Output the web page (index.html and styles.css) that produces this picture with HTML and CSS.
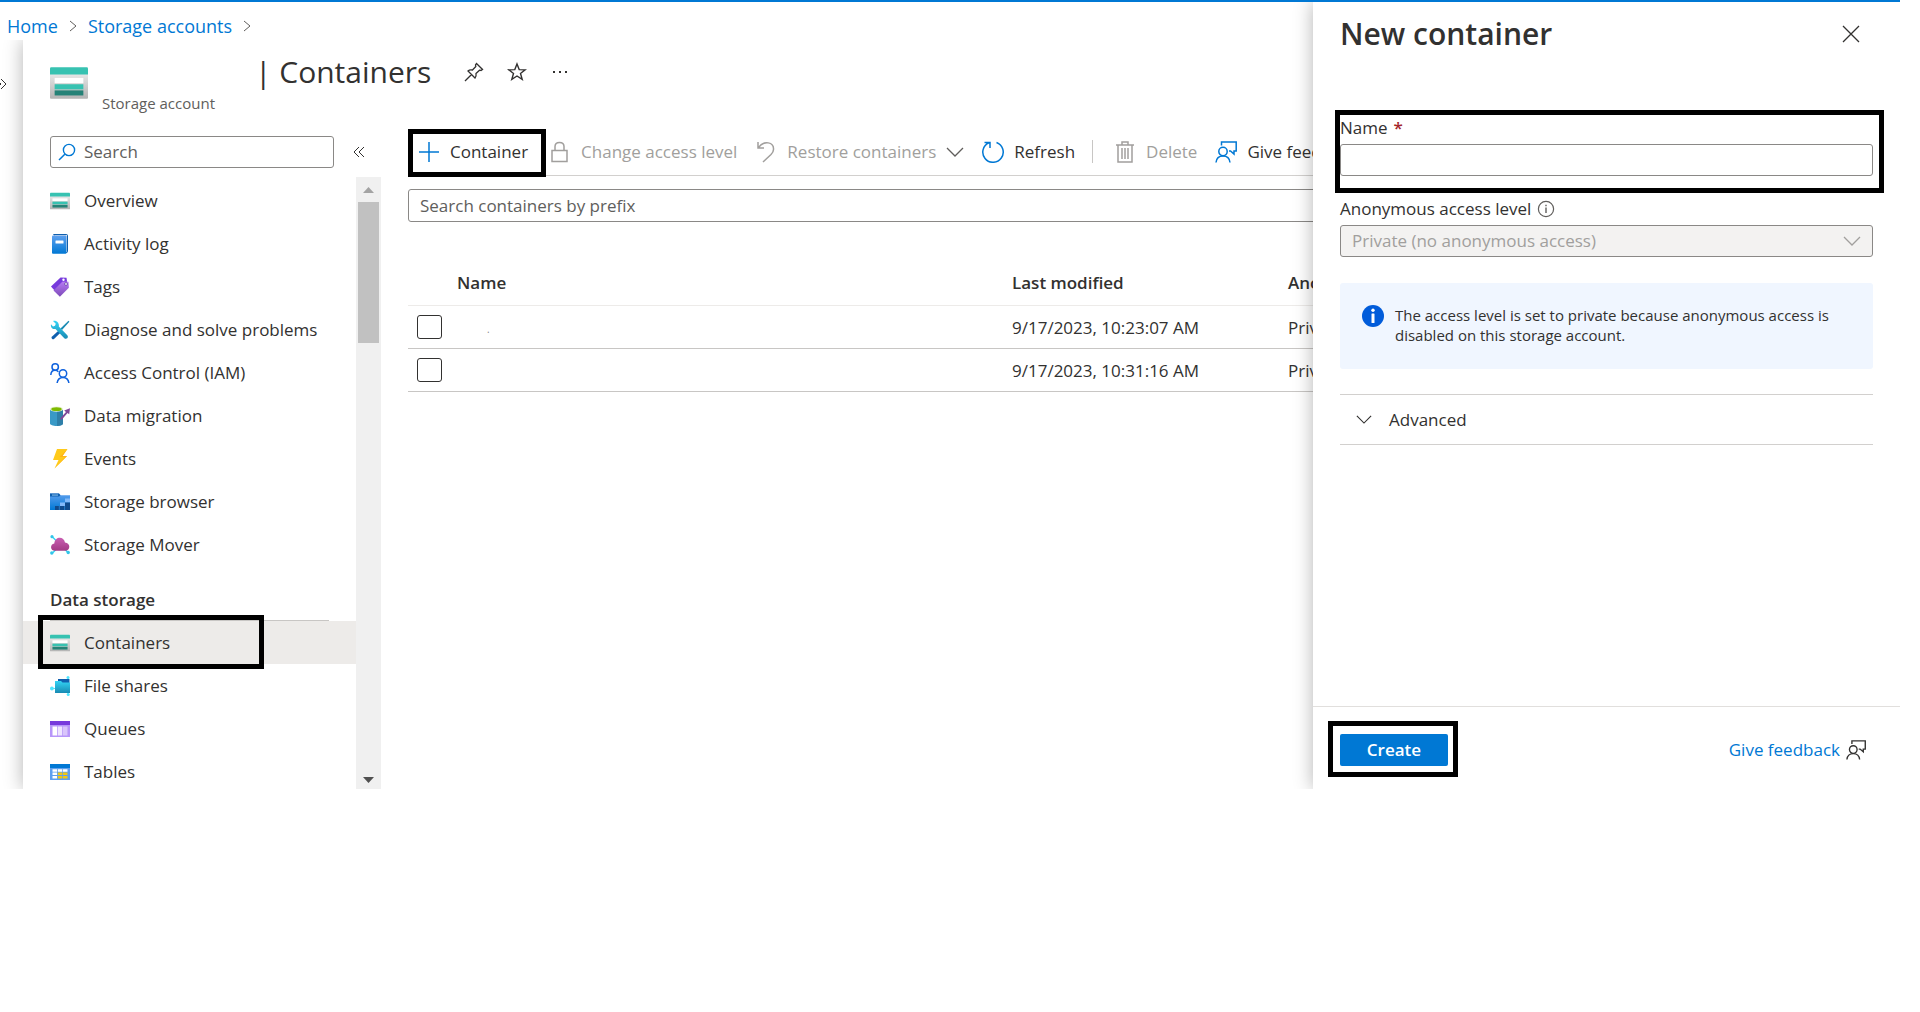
FILE: index.html
```html
<!DOCTYPE html>
<html lang="en">
<head>
<meta charset="utf-8">
<title>Containers - Storage account</title>
<link rel="stylesheet" href="styles.css">
</head>
<body>
<svg class="defs" aria-hidden="true">
  <defs>
    <linearGradient id="g-grey" x1="0" y1="0" x2="0" y2="1"><stop offset="0" stop-color="#f2f2f2"/><stop offset="1" stop-color="#b3b3b3"/></linearGradient>
    <linearGradient id="g-blue" x1="0" y1="0" x2="0" y2="1"><stop offset="0" stop-color="#5ea0ef"/><stop offset="1" stop-color="#0078d4"/></linearGradient>
    <linearGradient id="g-cyan" x1="0" y1="0" x2="0" y2="1"><stop offset="0" stop-color="#32d4f5"/><stop offset="1" stop-color="#198ab3"/></linearGradient>
    <linearGradient id="g-purple" x1="0" y1="0" x2="0" y2="1"><stop offset="0" stop-color="#b77af4"/><stop offset="1" stop-color="#7c4ab8"/></linearGradient>
    <linearGradient id="g-pink" x1="0" y1="0" x2="0" y2="1"><stop offset="0" stop-color="#c95eb2"/><stop offset="1" stop-color="#a33a85"/></linearGradient>
    <symbol id="storage" viewBox="0 0 18 18">
      <rect x="0" y="2" width="18" height="14.500" rx=".5" fill="url(#g-grey)"/>
      <path d="M.6 1.500h16.800q.6 0 .6.600V5H0V2.100Q0 1.500 .6 1.500z" fill="#37c2b1"/>
      <rect x="2.200" y="6.600" width="13.600" height="2.500" fill="#fff"/>
      <rect x="2.200" y="9.600" width="13.600" height="2.400" fill="#37c2b1"/>
      <rect x="2.200" y="12.500" width="13.600" height="2.400" fill="#258277"/>
    </symbol>
    <symbol id="feedback" viewBox="0 0 22 22">
      <g fill="none" stroke="currentColor" stroke-width="1.500">
        <circle cx="8" cy="10.500" r="4.200"/><path d="M1 21.500c.4-4 3-6.500 7-6.500s6.600 2.500 7 6.500M6.500 4.500V1h14.700v9H19v3l-3.500-3h-1.500"/>
      </g>
    </symbol>
    <symbol id="chev" viewBox="0 0 18 10"><path d="M1 1l8 8 8-8" fill="none" stroke="currentColor" stroke-width="1.300"/></symbol>
    <symbol id="chev-r" viewBox="0 0 8 12"><path d="M1 1l6 5-6 5" fill="none" stroke="currentColor"/></symbol>
    <symbol id="dbl" viewBox="0 0 12 12"><path d="M6 1L1 6l5 5M11 1L6 6l5 5" fill="none" stroke="currentColor"/></symbol>
  </defs>
</svg>

<div class="shell">
  <div class="workspace">
    <nav class="crumbs" aria-label="Breadcrumb">
      <a href="#">Home</a>
      <svg class="crumb-sep"><use href="#chev-r"/></svg>
      <a href="#">Storage accounts</a>
      <svg class="crumb-sep"><use href="#chev-r"/></svg>
    </nav>
    <div class="stage">
      <div class="rail"><button class="icon-btn expand" aria-label="Expand"><svg class="dbl"><use href="#dbl"/></svg></button></div>
      <div class="blade">
        <header class="blade-head">
          <svg class="res-icon"><use href="#storage"/></svg>
          <p class="res-type">Storage account</p>
          <h1>| Containers</h1>
          <button class="icon-btn" aria-label="Pin"><svg width="20" height="20" viewBox="0 0 20 20"><path d="M12.500 1.500l6 6-1.500 1-1.500-.3-3.500 3.300c.4 2 0 3.300-1 4.500L4 9c1.200-1.200 2.500-1.500 4.500-1l3.300-3.500-.3-1.500zM7.300 12.700L1 19" fill="none" stroke="currentColor" stroke-width="1.300"/></svg></button>
          <button class="icon-btn" aria-label="Favorite"><svg width="20" height="20" viewBox="0 0 20 20"><path d="M10 2l2.200 5.600 6 .2-4.700 3.700 1.700 5.800L10 14l-5.200 3.300 1.700-5.800L1.800 7.800l6-.2z" fill="none" stroke="currentColor" stroke-width="1.400"/></svg></button>
          <button class="icon-btn" aria-label="More"><svg width="20" height="20" viewBox="0 0 20 20"><path d="M3 9h2v2H3zM9 9h2v2H9zM15 9h2v2h-2z" fill="currentColor"/></svg></button>
        </header>
        <div class="blade-body">
          <div class="side">
            <div class="side-search">
              <label class="search">
                <svg width="18" height="18" viewBox="0 0 18 18"><path d="M6.800 11.200L1 17" stroke="#0078d4" stroke-width="1.500"/><circle cx="11" cy="7" r="5.600" fill="none" stroke="#0078d4" stroke-width="1.400"/></svg>
                <input type="text" placeholder="Search" aria-label="Search menu">
              </label>
              <button class="icon-btn" aria-label="Collapse menu"><svg class="dbl"><use href="#dbl"/></svg></button>
            </div>
            <div class="menu-scroll">
              <nav class="menu" aria-label="Resource menu">
                <a href="#"><svg><use href="#storage"/></svg>Overview</a>
                <a href="#"><svg viewBox="0 0 20 20"><path d="M3 0h13q2 0 2 2v15q0 2-2 2z" fill="#0f5fae"/><path d="M4 1h13v17h-2z" fill="#e6e6e6"/><rect x="2" y="1.500" width="14.500" height="18.300" rx="1" fill="url(#g-blue)"/><rect x="5.500" y="6.500" width="8" height="3" rx=".5" fill="#fff"/></svg>Activity log</a>
                <a href="#"><svg viewBox="0 0 20 20"><path d="M1 9.500L10.500.6l6 .2.600 4L5 14z" fill="#773adc"/><path d="M3.500 13.500L12.500 4.500l6 .300.400 6-9 9z" fill="url(#g-purple)"/><circle cx="13.500" cy="2.800" r="1.200" fill="#fff"/><circle cx="16" cy="7" r="1.400" fill="#fff" stroke="#552f99" stroke-width=".7"/></svg>Tags</a>
                <a href="#"><svg viewBox="0 0 20 20"><path d="M18.500.8l.9.900L12 10l-1.500-1.500z" fill="#198ab3"/><path d="M9.500 9.800l2 2L4 19q-1 .8-2-.2t-.2-2z" fill="#0f5fae"/><path d="M3 1l2.800 2.800-.8 2-2 .7L1 4.300C.3 7 2.300 9.600 5.500 9l8.800 9.200c2 1.800 4.800-.6 3-2.900L8.800 6.500C9.500 3 6.500-.2 3 1z" fill="url(#g-cyan)"/></svg>Diagnose and solve problems</a>
                <a href="#"><svg viewBox="0 0 20 20"><g fill="none" stroke="#0f62de" stroke-width="1.500"><circle cx="5.200" cy="4" r="3.200"/><path d="M.8 12C1 9 2.500 7.300 5 7.300c1.500 0 2.600.5 3.400 1.500"/><circle cx="13" cy="10.500" r="3.700"/><path d="M7 21c.3-4 2.500-6.600 6-6.600s5.700 2.600 6 6.600"/></g></svg>Access Control (IAM)</a>
                <a href="#"><svg viewBox="0 0 20 20"><path d="M0 3v14.500c0 1.300 3 2.500 6.500 2.500s6.500-1.200 6.500-2.500V3z" fill="#3999c6"/><path d="M7 4h6v13.500c0 1.300-2.500 2.300-6 2.500z" fill="#2f7fa8"/><ellipse cx="6.500" cy="3.200" rx="6.500" ry="2.600" fill="#e8f2d0"/><ellipse cx="6.500" cy="3.200" rx="5.200" ry="1.900" fill="#7fba00"/><path d="M10 12.500l6-6.500-1.800-1.600L20 2.200l-.8 6-1.700-1.100-6 7z" fill="#804998"/></svg>Data migration</a>
                <a href="#"><svg viewBox="0 0 20 20"><path d="M7 0h10.500l-5 7H17L4.500 19.600 8.500 11H3z" fill="#ffca1a"/><path d="M17.500 0l-5 7H17L4.500 19.600 15 8H9.500z" fill="#ffb31a"/></svg>Events</a>
                <a href="#"><svg viewBox="0 0 20 20"><path d="M0 1.500h9l1.500 1.700H20V18H0z" fill="url(#g-blue)"/><path d="M0 1.500h9l1.500 1.700-1.500 1.300H0z" fill="#0f5fae"/><path d="M2 2.600h6v.9H2z" fill="#9cd0f8"/><path d="M15 6.500h5v4h-5zM10 10.500h5v3.500h-5z" fill="#83b9f9"/><path d="M5 14h15v4H5zM15 10.500h5V14h-5z" fill="#114a8b"/><path d="M9.300 14v4M14.600 14v4" stroke="#2b88d8" stroke-width=".8"/></svg>Storage browser</a>
                <a href="#"><svg viewBox="0 0 20 20"><path d="M2 1.500l6 6M2 18.500l6-6M18.500 18l-6-6" stroke="#32d4f5" stroke-width="1.400"/><circle cx="2" cy="1.700" r="1.600" fill="#32c5e9"/><circle cx="1.800" cy="18" r="1.700" fill="#32c5e9"/><circle cx="18.200" cy="17.500" r="1.700" fill="#32c5e9"/><path d="M5 15.800c-5.300 0-5-6.600-.7-7.200C4.800 1 14 .8 15 7.600c5.800.300 5.600 8.200.200 8.200z" fill="url(#g-pink)"/></svg>Storage Mover</a>
                <h2>Data storage</h2>
                <a href="#" class="current" aria-current="page"><svg><use href="#storage"/></svg>Containers</a>
                <a href="#"><svg viewBox="0 0 20 20"><path d="M18 1v18M2 12.500h5" stroke="#50e6ff"/><path d="M8 3h11.500v5H8z" fill="#0f5fae"/><path d="M5 5h6l1.500 1.500H20V17H5z" fill="url(#g-cyan)"/><circle cx="18" cy="1.500" r="1.500" fill="#50e6ff"/><circle cx="18.200" cy="18.500" r="1.500" fill="#50e6ff"/><circle cx="1.900" cy="12.500" r="1.900" fill="#50e6ff"/></svg>File shares</a>
                <a href="#"><svg viewBox="0 0 20 20"><rect y="2" width="20" height="16" rx=".6" fill="#b796f9"/><path d="M0 2h20v4H0z" fill="#773adc"/><path d="M2.500 7.500h4.500v9H2.500z" fill="#fff"/><path d="M7.700 7.500h4.500v9H7.700z" fill="#efe6ff"/><path d="M13 7.500h4.500v9H13z" fill="#d9c5fb"/></svg>Queues</a>
                <a href="#"><svg viewBox="0 0 20 20"><rect y="2" width="20" height="16" rx=".6" fill="#5ea0ef"/><path d="M0 2h20v4H0z" fill="#0078d4"/><path d="M2.500 7.300h4.500v2.500H2.500zM7.800 7.300h4.500v2.500H7.800zM13 7.300h4.500v2.500H13zM2.500 10.600h4.500v2.500H2.500zM2.500 13.900h4.500v2.500H2.500z" fill="#fff"/><path d="M7.800 10.600h4.500v2.500H7.800zM13 10.600h4.500v2.500H13zM7.800 13.900h4.500v2.500H7.800zM13 13.900h4.500v2.500H13z" fill="#f2c811"/></svg>Tables</a>
              </nav>
              <div class="scrollbar" aria-hidden="true">
                <svg width="11" height="6" viewBox="0 0 11 6"><path d="M0 6l5.500-6L11 6z" fill="#a3a3a3"/></svg>
                <div class="thumb"></div>
                <svg width="11" height="6" viewBox="0 0 11 6"><path d="M0 0l5.500 6L11 0z" fill="#505050"/></svg>
              </div>
            </div>
          </div>
          <main class="main">
            <div class="toolbar">
              <button class="tool marked"><svg class="blue" viewBox="0 0 22 22"><path d="M11 1v20M1 11h20" stroke="currentColor" stroke-width="1.500"/></svg>Container</button>
              <button class="tool" disabled><svg viewBox="0 0 22 22"><path d="M3 9.500h15V20.500H3zM6 9.500V5.500c0-5.500 9-5.500 9 0v4" fill="none" stroke="currentColor" stroke-width="1.500"/></svg>Change access level</button>
              <button class="tool" disabled><svg viewBox="0 0 22 22"><path d="M3 1v6h6M3.500 6.500C9-1 19 1 18.500 8.500c0 2-1 3.500-2.500 5L8 21" fill="none" stroke="currentColor" stroke-width="1.500"/></svg>Restore containers<svg class="tool-chev"><use href="#chev"/></svg></button>
              <button class="tool"><svg class="blue" viewBox="0 0 22 22"><path d="M14.500 1.500A10.200 10.200 0 1 1 7 1.700M2.500 1.500H8v5.500" fill="none" stroke="currentColor" stroke-width="1.500"/></svg>Refresh</button>
              <span class="divider"></span>
              <button class="tool" disabled><svg viewBox="0 0 22 22"><path d="M2 4h18M4 4v17h14V4M8 4V1h6v3M8 7v11M11 7v11M14 7v11" fill="none" stroke="currentColor" stroke-width="1.500"/></svg>Delete</button>
              <button class="tool"><svg class="blue"><use href="#feedback"/></svg>Give feedback</button>
            </div>
            <input class="field prefix" type="text" placeholder="Search containers by prefix" aria-label="Search containers by prefix">
            <table class="grid">
              <thead><tr><th class="c-check"></th><th class="c-name">Name</th><th class="c-date">Last modified</th><th>Anonymous access level</th></tr></thead>
              <tbody>
                <tr><td><input type="checkbox" aria-label="Select first container"></td><td><span class="speck">.</span></td><td>9/17/2023, 10:23:07 AM</td><td>Private</td></tr>
                <tr><td><input type="checkbox" aria-label="Select second container"></td><td></td><td>9/17/2023, 10:31:16 AM</td><td>Private</td></tr>
              </tbody>
            </table>
          </main>
        </div>
      </div>
    </div>
  </div>

  <aside class="panel" aria-label="New container">
    <header class="panel-head">
      <h2>New container</h2>
      <button class="icon-btn" aria-label="Close"><svg width="18" height="18" viewBox="0 0 18 18"><path d="M1 1l16 16M17 1L1 17" stroke="currentColor" stroke-width="1.300"/></svg></button>
    </header>
    <form class="panel-form">
      <div class="form-row name-row">
        <label for="cname">Name <span class="req">*</span></label>
        <input class="field" id="cname" type="text">
      </div>
      <div class="form-row">
        <label for="level">Anonymous access level
          <svg class="hint" width="18" height="18" viewBox="0 0 18 18"><circle cx="9" cy="9" r="7.600" fill="none" stroke="currentColor" stroke-width="1.200"/><path d="M8.300 4.800h1.400v1.500H8.300zM8.300 7.500h1.400v5.600H8.300z" fill="currentColor"/></svg>
        </label>
        <div class="select">
          <select class="field" id="level" disabled><option>Private (no anonymous access)</option></select>
          <svg class="select-chev"><use href="#chev"/></svg>
        </div>
      </div>
      <div class="notice">
        <svg width="22" height="22" viewBox="0 0 22 22"><circle cx="11" cy="11" r="11" fill="#015cda"/><circle cx="11" cy="5.300" r="1.700" fill="#fff"/><rect x="9.500" y="8.500" width="3" height="9.500" rx=".5" fill="#fff"/></svg>
        <p>The access level is set to private because anonymous access is disabled on this storage account.</p>
      </div>
      <button type="button" class="advanced"><svg class="adv-chev"><use href="#chev"/></svg>Advanced</button>
    </form>
    <footer class="panel-foot">
      <span class="create-wrap"><button class="create">Create</button></span>
      <a href="#">Give feedback <svg class="fb"><use href="#feedback"/></svg></a>
    </footer>
  </aside>
</div>
</body>
</html>
```
FILE: styles.css
```css
* { box-sizing: border-box; }
body {
  margin: 0;
  background: #fff;
  color: #323130;
  font: 17px/24px "Open Sans", "Noto Sans", sans-serif;
}
h1, h2, p { margin: 0; }
a { color: #0078d4; text-decoration: none; }
button, input, select { font: inherit; color: inherit; }
button { background: none; border: 0; padding: 0; }
svg { flex: none; display: block; }
.defs { position: absolute; width: 0; height: 0; }

.shell {
  display: flex;
  margin-right: 20px;
  border-top: 2px solid #0078d4;
  overflow: hidden;
}
.workspace { flex: 1; min-width: 0; overflow: hidden; }

.crumbs {
  display: flex;
  align-items: center;
  gap: 11px;
  height: 38px;
  padding: 10px 7px 0;
  font-size: 18px;
}
.crumb-sep { width: 8px; height: 12px; color: #605e5c; }

.stage { display: flex; overflow: hidden; }
.rail { width: 23px; padding-top: 38px; }
.expand svg { transform: scaleX(-1); margin-left: -5px; }
.dbl { width: 12px; height: 12px; }
.icon-btn { display: flex; color: #323130; }
.blade { flex: 1; min-width: 0; background: #fff; box-shadow: 0 0 18px rgba(0, 0, 0, .3); }

.blade-head {
  display: flex;
  align-items: flex-start;
  height: 96px;
  padding: 12px 0 0 27px;
}
.res-icon { width: 38px; height: 38px; margin-top: 12px; }
.res-type { width: 153px; margin: 39px 0 0 14px; font-size: 15px; color: #605e5c; }
h1 { margin-right: 33px; font-size: 30px; line-height: 40px; font-weight: 400; }
.blade-head .icon-btn { margin: 10px 23px 0 0; }

.blade-body { display: flex; }
.side { width: 358px; flex: none; }
.side-search { display: flex; align-items: center; gap: 19px; height: 32px; margin: 0 0 9px 27px; }
.search {
  display: flex;
  align-items: center;
  gap: 8px;
  width: 284px;
  height: 32px;
  padding: 0 7px;
  border: 1px solid #8a8886;
  border-radius: 3px;
}
.search input { flex: 1; min-width: 0; border: 0; padding: 0; outline: 0; background: none; }
::placeholder { color: #605e5c; opacity: 1; }

.menu-scroll { display: flex; height: 612px; overflow: hidden; }
.menu { flex: 1; padding-top: 2px; }
.menu a {
  display: flex;
  align-items: center;
  gap: 14px;
  height: 43px;
  padding-left: 27px;
  color: #323130;
}
.menu a svg { width: 20px; height: 20px; }
.menu h2 {
  height: 55px;
  margin: 0 27px;
  padding-top: 22px;
  border-bottom: 1px solid #c8c6c4;
  font-size: 17px;
  line-height: 24px;
  font-weight: 600;
}
.menu .current { position: relative; background: #edebe9; }
.current::after, .marked::after, .name-row::after, .create-wrap::after {
  content: "";
  position: absolute;
  border: 5px solid #000;
  pointer-events: none;
}
.current::after { inset: -6px 92px -5px 15px; }

.scrollbar {
  display: flex;
  flex-direction: column;
  align-items: center;
  width: 25px;
  padding: 10px 0 6px;
  background: #f0f0f0;
}
.thumb { width: 21px; height: 141px; margin: 9px 0 auto; background: #c1c1c1; }

.main { flex: 1; min-width: 0; padding-left: 27px; }
.toolbar {
  display: flex;
  align-items: center;
  height: 40px;
  padding-bottom: 8px;
  border-bottom: 1px solid #d2d0ce;
}
.tool { position: relative; display: flex; flex: none; align-items: center; gap: 10px; height: 32px; margin-right: 17px; padding-left: 1px; white-space: nowrap; }
.tool svg { width: 22px; height: 22px; }
.tool .tool-chev { width: 18px; height: 10px; color: #605e5c; }
.tool:disabled { color: #a19f9d; }
.tool .blue, .blue { color: #0078d4; }
.divider { flex: none; width: 1px; height: 23px; margin-right: 20px; background: #c8c6c4; }
.tool.marked { margin: 0 20px 0 9px; }
.marked::after { inset: -7px -18px -9px -9px; }

.field {
  display: block;
  width: 100%;
  height: 32px;
  padding: 0 11px;
  border: 1px solid #8a8886;
  border-radius: 3px;
  background: #fff;
  outline: 0;
}
.prefix { width: 110%; height: 33px; margin-top: 13px; }

.grid { width: 100%; margin-top: 40px; table-layout: fixed; border-collapse: collapse; }
.grid th, .grid td { height: 43px; padding: 0; text-align: left; white-space: nowrap; border-bottom: 1px solid #c8c6c4; }
.grid td { padding-top: 2px; }
.grid td:first-child { padding-top: 0; }
.grid th { font-weight: 600; border-color: #edebe9; }
.c-check { width: 49px; }
.c-name { width: 555px; }
.c-date { width: 276px; }
.grid input {
  appearance: none;
  display: block;
  width: 25px;
  height: 24px;
  margin: 0 0 0 9px;
  border: 1px solid #323130;
  border-radius: 3px;
}
.speck { padding-left: 30px; font-size: 10px; color: #8a8886; }

.panel {
  position: relative;
  display: flex;
  flex-direction: column;
  width: 587px;
  background: #fff;
  box-shadow: 0 0 18px rgba(0, 0, 0, .3);
}
.panel-head { display: flex; align-items: center; justify-content: space-between; padding: 12px 40px 0 27px; }
.panel-head h2 { font-size: 30px; line-height: 40px; font-weight: 600; }
.panel-form { padding: 60px 27px 0; }
.form-row { position: relative; margin-bottom: 19px; }
.form-row label { display: flex; align-items: center; height: 28px; margin-bottom: 2px; gap: 6px; }
.name-row::after { inset: -4px -11px -17px -5px; }
.req { color: #a4262c; font-weight: 600; }
.hint { color: #605e5c; }
.select { position: relative; }
.select select { appearance: none; background: #f3f2f1; color: #a19f9d; opacity: 1; }
.select-chev { position: absolute; right: 12px; top: 11px; width: 18px; height: 10px; color: #a19f9d; }
.notice {
  display: flex;
  gap: 11px;
  height: 86px;
  margin-top: 26px;
  padding: 22px 24px 0 22px;
  border-radius: 3px;
  background: #f0f6ff;
}
.notice p { font-size: 15px; line-height: 20px; }
.advanced {
  display: flex;
  align-items: center;
  gap: 17px;
  width: 100%;
  height: 51px;
  margin-top: 25px;
  padding-left: 16px;
  border: solid #d2d0ce;
  border-width: 1px 0;
}
.adv-chev { width: 16px; height: 9px; }
.panel-foot {
  display: flex;
  align-items: center;
  justify-content: space-between;
  height: 83px;
  margin-top: auto;
  padding: 4px 34px 0 27px;
  border-top: 1px solid #e1dfdd;
}
.panel-foot a { display: flex; align-items: center; gap: 6px; }
.fb { width: 20px; height: 20px; color: #323130; }
.create-wrap { position: relative; }
.create-wrap::after { inset: -13px -10px -11px -12px; }
.create { display: block; width: 108px; height: 32px; border-radius: 2px; background: #0078d4; color: #fff; font-weight: 600; }
```
